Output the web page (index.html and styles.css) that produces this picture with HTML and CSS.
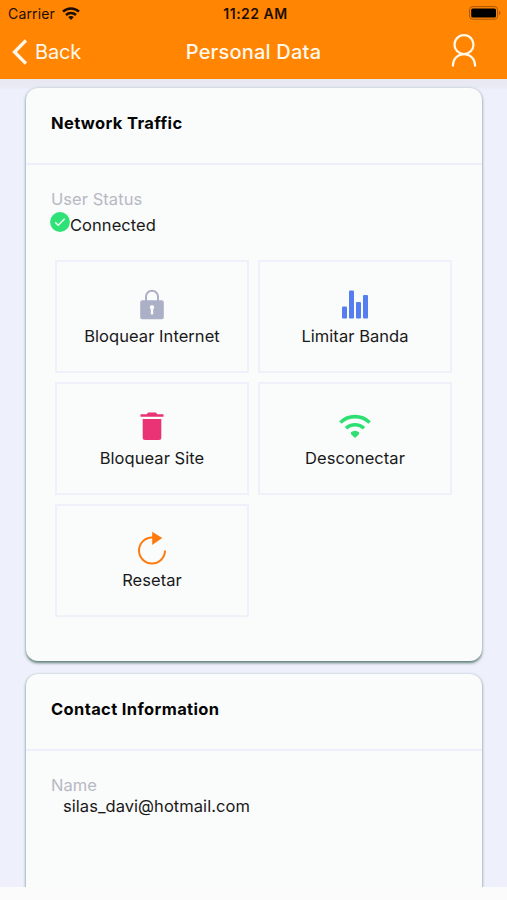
FILE: index.html
```html
<!DOCTYPE html>
<html lang="en">
<head>
<meta charset="utf-8">
<title>Personal Data</title>
<link rel="stylesheet" href="styles.css">
</head>
<body>
<div class="app">
  <header class="header">
    <div class="status-bar">
      <div class="carrier"><span>Carrier</span>
        <svg width="18" height="13" viewBox="0 0 18 13" fill="none" stroke="#1c0e00" stroke-width="2.5"><path d="M1 4.7a11.4 11.4 0 0 1 16 0M4 8a7.2 7.2 0 0 1 10 0"/><path d="M6.200 10.100a4.300 4.300 0 0 1 5.600 0L9 12.900z" fill="#1c0e00" stroke="none"/></svg>
      </div>
      <div class="clock">11:22 AM</div>
      <svg class="battery" width="32" height="14" viewBox="0 0 32 14"><rect x=".6" y=".6" width="28" height="12.6" rx="3" fill="none" stroke="#a85700"/><rect x="2.2" y="2.4" width="24.8" height="9.2" rx="1.6" fill="#000"/><path d="M30 5v4q1.4-.6 1.4-2T30 5z" fill="#a85700"/></svg>
    </div>
    <nav class="nav">
      <div class="back">
        <svg width="16" height="26" viewBox="0 0 16 26" fill="none" stroke="#fff8ec" stroke-width="3.3"><path d="M15 1.500 3.500 13 15 24.500"/></svg>
        <span>Back</span>
      </div>
      <h1 class="title">Personal Data</h1>
      <svg class="person" width="28" height="34" viewBox="0 0 28 34" fill="none" stroke="#fff8ec" stroke-width="2.2"><circle cx="14" cy="10.600" r="9.500"/><path d="M3 32.500v-1.400a11 11 0 0 1 22 0v1.400"/></svg>
    </nav>
  </header>
  <main class="content">
    <section class="card traffic">
      <h2 class="card-title">Network Traffic</h2>
      <div class="card-body">
        <div class="label">User Status</div>
        <div class="status">
          <svg width="20" height="20" viewBox="0 0 20 20"><circle cx="10" cy="10" r="9.900" fill="#2ee277"/><path d="m5.200 10.300 3 3 6.500-6.500" fill="none" stroke="#effff3" stroke-width="1.500"/></svg>
          <span>Connected</span>
        </div>
        <div class="tiles">
          <div class="tile">
            <svg width="32" height="32" viewBox="0 0 32 32"><path d="M10 14V8.700a6 6 0 0 1 12 0V14" fill="none" stroke="#abb0c7" stroke-width="2"/><path fill-rule="evenodd" fill="#abb0c7" d="M6.200 12.200h19.600q2 0 2 2v15q0 2-2 2H6.200q-2 0-2-2v-15q0-2 2-2zM16 17a2.300 2.300 0 0 0-1.200 4.200V26.400h2.400v-5.200A2.300 2.300 0 0 0 16 17z"/></svg>
            <span>Bloquear Internet</span>
          </div>
          <div class="tile">
            <svg width="32" height="32" viewBox="0 0 32 32" fill="#557ff0"><rect x="3" y="18.500" width="5" height="12" rx="1"/><rect x="10" y="2.500" width="5" height="28" rx="1"/><rect x="17" y="14" width="5" height="16.500" rx="1"/><rect x="24" y="7" width="5" height="23.500" rx="1"/></svg>
            <span>Limitar Banda</span>
          </div>
          <div class="tile">
            <svg width="32" height="32" viewBox="0 0 32 32" fill="#e93374"><path d="M4.500 4.200h6.200l1.500-1.700h7.600l1.500 1.700h6.200v2.600h-23z"/><path d="M6.700 9h18.600v18.500q0 2.500-2.500 2.500H9.200q-2.500 0-2.500-2.500z"/></svg>
            <span>Bloquear Site</span>
          </div>
          <div class="tile">
            <svg width="32" height="32" viewBox="0 0 32 32" fill="none" stroke="#2edf73" stroke-width="3.600"><path d="M1.400 12.500a21 21 0 0 1 29.200 0M7 18.300a13 13 0 0 1 18 0"/><path d="M12 22.300a6 6 0 0 1 8 0v2L16 28l-4-3.700z" fill="#2edf73" stroke="none"/></svg>
            <span>Desconectar</span>
          </div>
          <div class="tile">
            <svg class="reset" width="32" height="32" viewBox="0 0 32 32" fill="none" stroke="#ff7a0c" stroke-width="2"><path d="M17 5.600h-1A13 13 0 1 0 29 18.600"/><path d="M17 1.200 24.800 6 17 11.500z" fill="#ff7a0c" stroke-width="1.600"/></svg>
            <span>Resetar</span>
          </div>
        </div>
      </div>
    </section>
    <section class="card contact">
      <h2 class="card-title">Contact Information</h2>
      <div class="card-body">
        <div class="label">Name</div>
        <div class="email">silas_davi@hotmail.com</div>
      </div>
    </section>
  </main>
  <div class="bottom-bar"></div>
</div>
</body>
</html>
```
FILE: styles.css
```css
* { box-sizing: border-box; }
body { margin: 0; font-family: Inter, "Liberation Sans", sans-serif; color: #191919; }
svg { display: block; flex: none; }
.app { height: 900px; display: flex; flex-direction: column; overflow: hidden; background: #eef0fc; }
.header { height: 79px; flex: none; background: #ff8503; box-shadow: 0 0 1px #c98f59; }
.status-bar { height: 27px; display: grid; grid-template-columns: 1fr auto 1fr; align-items: center; padding: 1px 6px 0 8px; color: #1c0e00; font-size: 14px; line-height: 26px; }
.carrier { display: flex; align-items: center; gap: 7px; letter-spacing: 0.15px; }
.carrier svg { margin-top: -2px; }
.clock { padding-left: 2px; font-weight: 600; letter-spacing: 0.5px; }
.battery { justify-self: end; margin-top: -2px; }
.nav { height: 50px; display: grid; grid-template-columns: 1fr auto 1fr; align-items: center; padding: 0 11px; color: #fff8ec; }
.back { display: flex; align-items: center; gap: 8px; font-size: 20px; line-height: 26px; letter-spacing: -0.2px; }
.title { margin: 0; font-size: 20px; line-height: 26px; font-weight: 500; letter-spacing: 0.2px; }
.person { justify-self: end; margin: 0 18px 3px 0; }
.content { flex: 1; min-height: 0; overflow: hidden; padding: 9px 25px 0 26px; display: flex; flex-direction: column; gap: 13px; background: linear-gradient(#e8e9f1 0, #e8e9f1 7px, #eef0fc 11px); }
.card { flex: none; background: #fafbfb; border-radius: 12px; box-shadow: 0 1.5px 3px #5c7d75; }
.traffic { height: 573px; }
.contact { height: 260px; }
.card-title { margin: 0; height: 77px; border-bottom: 2px solid #eeeffa; padding: 22px 25px 0; font-size: 16.5px; line-height: 26px; font-weight: 700; letter-spacing: 0.36px; color: #050505; }
.card-body { padding: 23px 25px 0; font-size: 16.5px; line-height: 22px; letter-spacing: 0.05px; }
.label { color: #b7b9c3; }
.status { display: flex; height: 23px; }
.status svg { margin-top: 2px; margin-left: -1px; }
.status span { line-height: 30px; }
.tiles { display: grid; grid-template-columns: 194px 194px; grid-auto-rows: 113px; gap: 9px; padding: 27px 0 0 4px; }
.tile { border: 2px solid #f0f0fb; display: flex; flex-direction: column; align-items: center; padding-top: 26px; }
.tile span { line-height: 32px; }
.reset { overflow: visible; }
.email { padding-left: 12px; line-height: 20px; }
.bottom-bar { height: 13px; flex: none; background: #fbfbfc; }
```
